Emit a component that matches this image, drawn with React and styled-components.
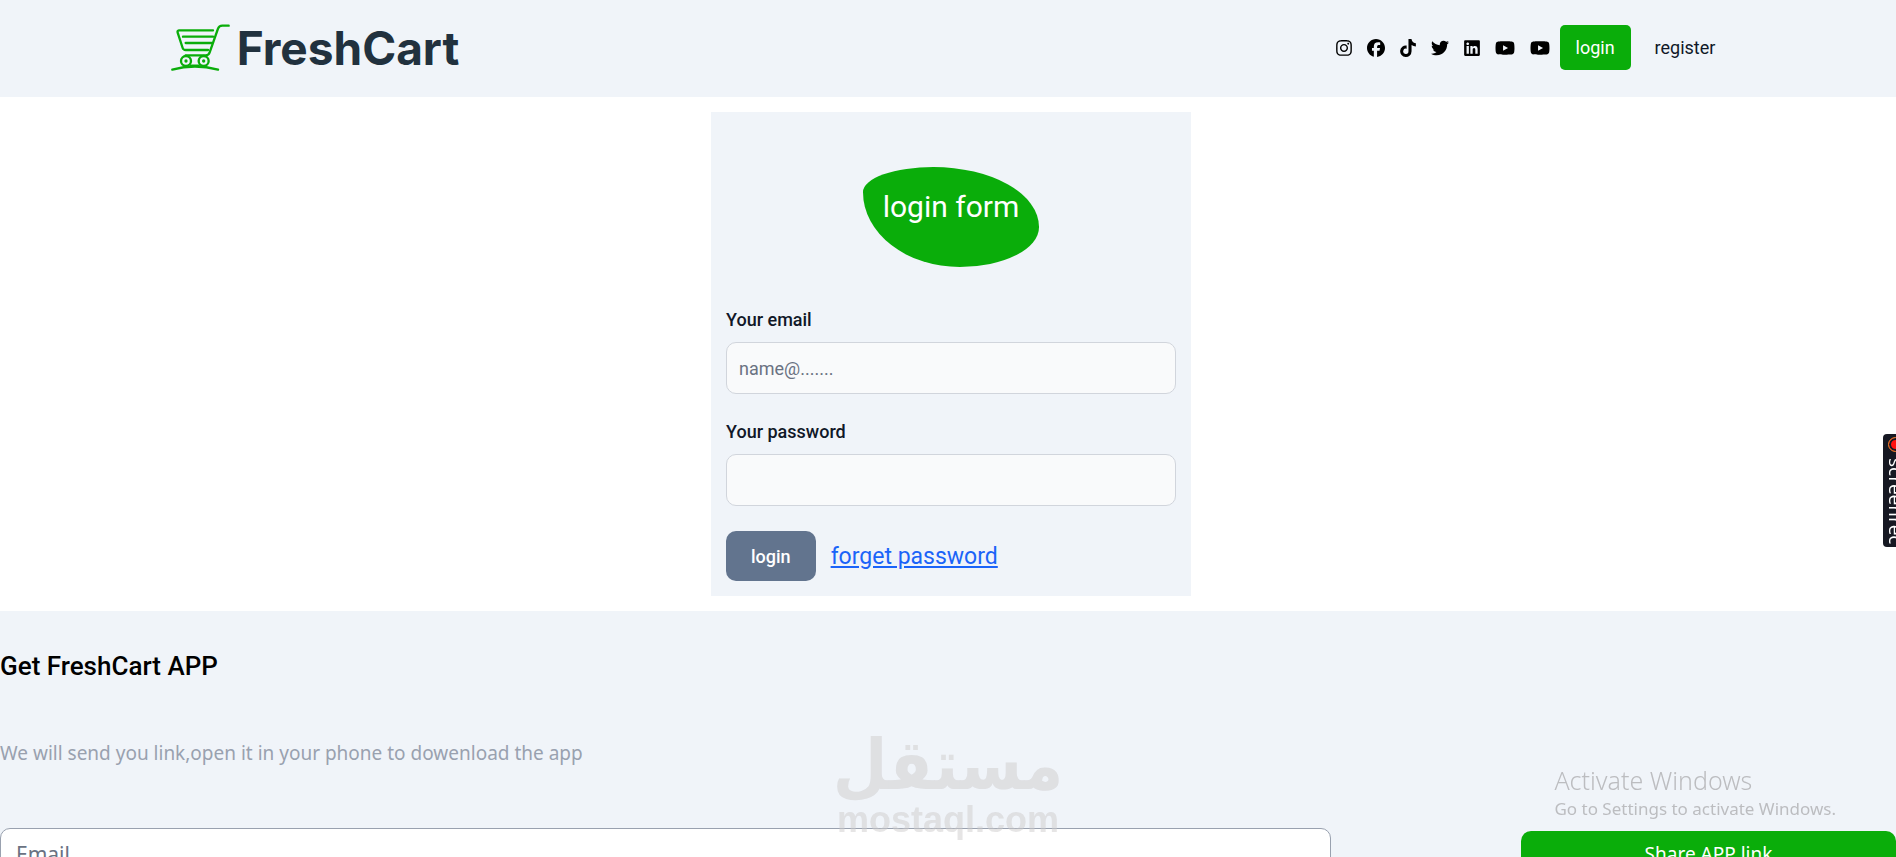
import styled, { createGlobalStyle } from "styled-components";
import {
    FaInstagram,
    FaFacebook,
    FaTiktok,
    FaTwitter,
    FaLinkedin,
    FaYoutube
} from "react-icons/fa6";

const socials = [
    { id: 1, name: "instagram", Icon: FaInstagram, width: 16 },
    { id: 2, name: "facebook", Icon: FaFacebook, width: 18 },
    { id: 3, name: "tiktok", Icon: FaTiktok, width: 16 },
    { id: 4, name: "twitter", Icon: FaTwitter, width: 18 },
    { id: 5, name: "linkedin", Icon: FaLinkedin, width: 16 },
    { id: 6, name: "youtube", Icon: FaYoutube, width: 20 },
    { id: 7, name: "youtube channel", Icon: FaYoutube, width: 20 },
];

export default function App() {
    return (
        <>
            <GlobalStyle />
            <NavBar />
            <main>
                <LoginForm />
            </main>
            <Footer />
            <Mostaql>
                <ArabicName lang="ar" dir="rtl">مستقل</ArabicName>
                <LatinName>mostaql.com</LatinName>
            </Mostaql>
            <Activate>
                <h2>Activate Windows</h2>
                <p>Go to Settings to activate Windows.</p>
            </Activate>
            <Recorder>
                <RecordDot />
                <span>screenrec</span>
            </Recorder>
        </>
    );
}

function NavBar() {
    return (
        <Header>
            <Brand href="#home">
                <CartIcon />
                <span>FreshCart</span>
            </Brand>
            <Nav>
                <Socials>
                    {socials.map(({ id, name, Icon, width }) => (
                        <li key={id}>
                            <a href={"#" + name.replace(" ", "-")} aria-label={name}>
                                <Icon style={{ width, height: 18 }} />
                            </a>
                        </li>
                    ))}
                </Socials>
                <NavLink href="#login" $active>login</NavLink>
                <NavLink href="#register">register</NavLink>
            </Nav>
        </Header>
    );
}

function CartIcon() {
    return (
        <CartSvg viewBox="34 40 177 144" aria-hidden="true">
            <path d="M207 45 H188 Q178 45 175 54 L150 125 Q147 134 138 134 H78" />
            <path d="M160 59 H58 Q52 60 54 66 L69 112 Q71 118 78 118 H145" />
            <path d="M70 78 H160 M78 97 H156" />
            <circle cx="79" cy="151" r="15" />
            <circle cx="132" cy="151" r="15" />
            <circle className="hub" cx="79" cy="151" r="5" />
            <circle className="hub" cx="132" cy="151" r="5" />
            <path d="M94 165 H117" />
            <path d="M38 177 Q105 158 175 177" />
        </CartSvg>
    );
}

function LoginForm() {
    return (
        <Card onSubmit={(e) => e.preventDefault()}>
            <Title>login form</Title>
            <Field>
                <label htmlFor="email">Your email</label>
                <input id="email" type="email" placeholder="name@......." />
            </Field>
            <Field>
                <label htmlFor="password">Your password</label>
                <input id="password" type="password" />
            </Field>
            <Actions>
                <SubmitButton type="submit">login</SubmitButton>
                <a href="#forget">forget password</a>
            </Actions>
        </Card>
    );
}

function Footer() {
    return (
        <FooterBox>
            <h2>Get FreshCart APP</h2>
            <p>We will send you link,open it in your phone to dowenload the app</p>
            <ShareRow>
                <ShareInput type="email" placeholder="Email" aria-label="Email" />
                <ShareButton type="button">Share APP link</ShareButton>
            </ShareRow>
        </FooterBox>
    );
}

const GlobalStyle = createGlobalStyle`
    * {
        box-sizing: border-box;
        margin: 0;
        padding: 0;
    }
    html {
        scrollbar-width: none;
    }
    body {
        background: #ffffff;
        color: #101828;
        font-family: Roboto, sans-serif;
        font-size: 18px;
        line-height: 25px;
    }
    input, button {
        font-family: inherit;
        font-size: inherit;
    }
    ul {
        list-style: none;
    }
`

const Header = styled.header`
    display: flex;
    align-items: center;
    justify-content: space-between;
    min-height: 97px;
    padding: 0 9% 2px;
    background: #f0f4f9;
`

const Brand = styled.a`
    display: flex;
    align-items: center;
    gap: 7px;
    color: #21313e;
    font-family: Inter, sans-serif;
    font-weight: 700;
    font-size: 46px;
    line-height: 48px;
    text-decoration: none;
`

const CartSvg = styled.svg`
    width: 59px;
    height: 48px;
    fill: none;
    stroke: #0aad0a;
    stroke-width: 7;
    stroke-linecap: round;
    stroke-linejoin: round;
    .hub {
        fill: #0aad0a;
        stroke: none;
    }
`

const Nav = styled.nav`
    display: flex;
    align-items: center;
`

const Socials = styled.ul`
    display: flex;
    align-items: center;
    gap: 15px;
    margin-right: 10px;
    a {
        display: flex;
        color: #000000;
    }
`

const NavLink = styled.a`
    padding: 10px 16px;
    border-radius: 5px;
    background: ${(props) => (props.$active ? "#0aad0a" : "transparent")};
    color: ${(props) => (props.$active ? "#ffffff" : "#101828")};
    text-decoration: none;
    & + & {
        margin-left: 8px;
        padding-right: 10px;
    }
`

const Card = styled.form`
    width: 480px;
    max-width: 100%;
    margin: 15px 0 15px 37.5%;
    padding: 55px 15px 15px;
    background: #f0f4f9;
`

const Title = styled.h1`
    width: fit-content;
    height: 100px;
    margin: 0 auto 40px;
    padding: 20px;
    border-radius: 40% 60% 45% 55% / 25% 60% 40% 75%;
    background: #0aad0a;
    color: #ffffff;
    font-weight: 400;
    font-size: 30px;
    line-height: 40px;
`

const Field = styled.div`
    display: flex;
    flex-direction: column;
    gap: 10px;
    margin-bottom: 25px;
    label {
        font-weight: 500;
    }
    input {
        height: 52px;
        padding: 0 12px;
        border: 1px solid #d1d5dc;
        border-radius: 10px;
        background: #f9fafb;
        color: #101828;
    }
    input::placeholder {
        color: #6a7282;
    }
`

const Actions = styled.div`
    display: flex;
    align-items: center;
    gap: 15px;
    a {
        color: #1b64f8;
        font-size: 23px;
    }
`

const SubmitButton = styled.button`
    height: 50px;
    padding: 0 25px;
    border: none;
    border-radius: 10px;
    background: #62748e;
    color: #ffffff;
    font-weight: 500;
    cursor: pointer;
`

const FooterBox = styled.footer`
    padding: 40px 0;
    background: #f0f4f9;
    h2 {
        color: #000000;
        font-weight: 500;
        font-size: 26px;
        line-height: 30px;
    }
    p {
        margin: 56px 0 59px;
        color: #99a1af;
        font-family: "Noto Sans", sans-serif;
        font-size: 19px;
        line-height: 32px;
    }
`

const ShareRow = styled.div`
    display: grid;
    grid-template-columns: 71fr 20fr;
    column-gap: 10%;
    align-items: center;
    font-family: "Noto Sans", sans-serif;
`

const ShareInput = styled.input`
    height: 52px;
    padding: 0 15px;
    border: 1px solid #99a1af;
    border-radius: 10px;
    background: #ffffff;
    font-size: 21px;
    &::placeholder {
        color: #6a7282;
    }
`

const ShareButton = styled.button`
    height: 46px;
    border: none;
    border-radius: 10px;
    background: #0aad0a;
    color: #ffffff;
    font-size: 19px;
    cursor: pointer;
`

const Mostaql = styled.div`
    position: fixed;
    bottom: 17px;
    left: 50%;
    transform: translateX(-50%);
    display: flex;
    flex-direction: column;
    align-items: center;
    color: #cdcbcc;
    font-weight: 700;
    opacity: 0.5;
    pointer-events: none;
`

const ArabicName = styled.span`
    font-family: "DejaVu Sans Condensed", "DejaVu Sans", sans-serif;
    font-size: 70px;
    line-height: 70px;
`

const LatinName = styled.span`
    font-family: "Liberation Sans", sans-serif;
    font-size: 36px;
    line-height: 40px;
`

const Activate = styled.aside`
    position: fixed;
    right: 60px;
    bottom: 36px;
    color: #bcbdc0;
    font-family: "Noto Sans", sans-serif;
    pointer-events: none;
    h2 {
        font-weight: 300;
        font-size: 25px;
        line-height: 34px;
    }
    p {
        font-size: 17px;
        line-height: 24px;
    }
`

const Recorder = styled.aside`
    position: fixed;
    top: 434px;
    right: -12px;
    display: flex;
    flex-direction: column;
    align-items: center;
    gap: 6px;
    width: 25px;
    height: 113px;
    padding-top: 3px;
    border-radius: 4px;
    background: #161822;
    color: #ffffff;
    span {
        writing-mode: vertical-rl;
        font-family: "Open Sans", sans-serif;
        font-size: 19px;
        line-height: 24px;
    }
`

const RecordDot = styled.i`
    flex: none;
    width: 15px;
    height: 15px;
    border: 1px solid #e8862a;
    border-radius: 50%;
    background: #ff1010;
    box-shadow: inset 0 0 0 2px #161822;
`
